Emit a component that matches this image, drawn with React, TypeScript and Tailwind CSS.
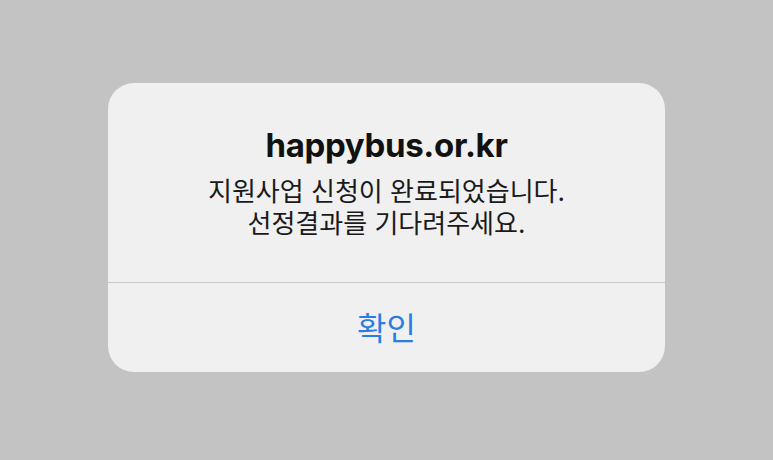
import React from 'react';

const FONT = { fontFamily: 'Inter, "Noto Sans CJK KR", sans-serif' };

export default function App() {
  return (
    <div className="w-[773px] h-[460px] bg-[#c3c3c3] flex items-start justify-center pt-[83px]" style={FONT}>
      <div className="w-[557px] h-[289px] bg-[#f0f0f0] rounded-[26px] flex flex-col overflow-hidden">
        <div className="h-[199px] flex flex-col items-center pt-[43px]">
          <div className="text-[33px] leading-[38px] font-bold text-[#111] tracking-[-0.01em]">happybus.or.kr</div>
          <div className="mt-[12px] text-[26px] leading-[32px] text-[#1a1a1a] text-center">
            <div>지원사업 신청이 완료되었습니다.</div>
            <div>선정결과를 기다려주세요.</div>
          </div>
        </div>
        <div className="h-px bg-[#c9c9c9]" />
        <button className="flex-1 flex items-center justify-center text-[32px] text-[#2a7de1] pt-[3px]">확인</button>
      </div>
    </div>
  );
}
